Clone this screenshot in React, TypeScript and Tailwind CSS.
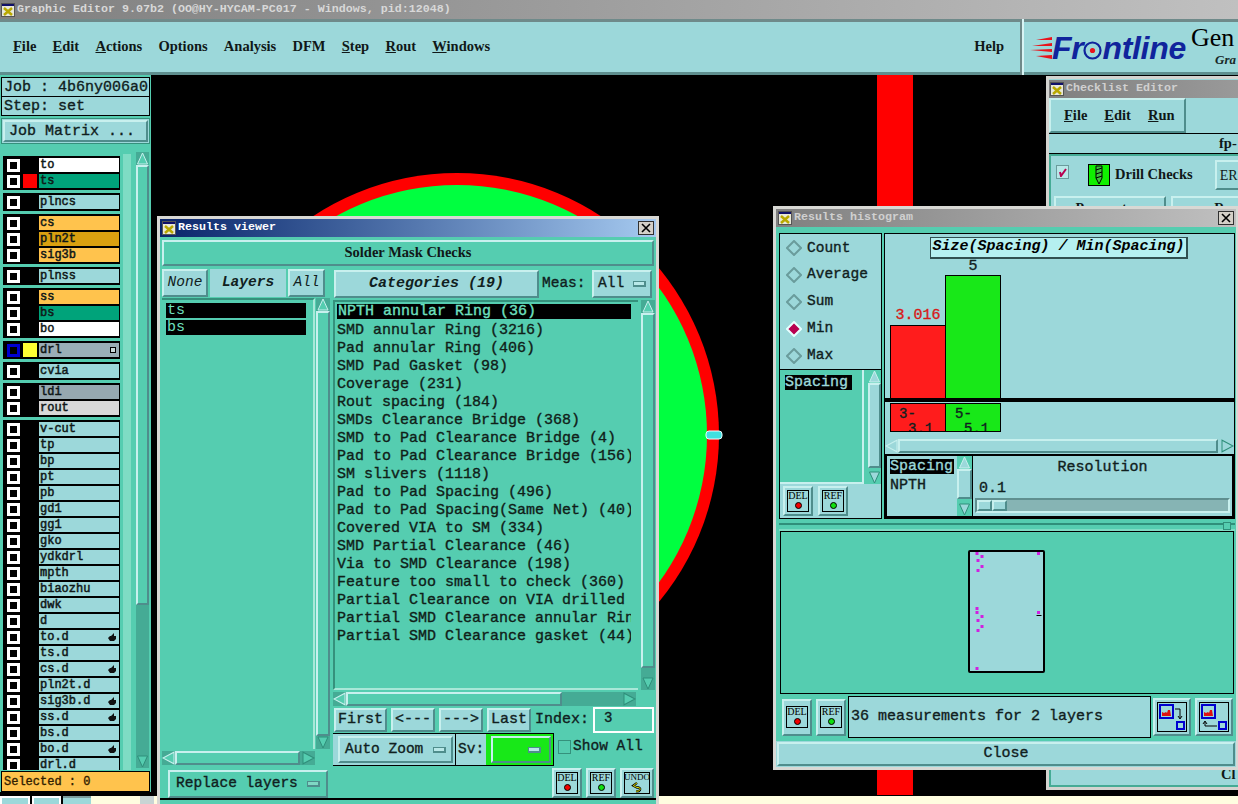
import React from "react";

const raised = "border-2 border-t-[#c8f0ee] border-l-[#c8f0ee] border-b-[#4f8d8c] border-r-[#4f8d8c]";
const mono = "font-['Liberation_Mono',monospace]";
const serif = "font-['Liberation_Serif',serif]";
// bitmap courier in the reference sits between regular and bold
const medium = "[-webkit-text-stroke:0.35px]";

const topLayers: { name: string; color: string; box?: string; boxBorder?: string; mark?: boolean }[][] = [
  [{ name: "to", color: "bg-white" }, { name: "ts", color: "bg-[#00a37a]", box: "bg-[#ff0000]" }],
  [{ name: "plncs", color: "bg-[#9cd8da]" }],
  [
    { name: "cs", color: "bg-[#ffc34d]" },
    { name: "pln2t", color: "bg-[#daa010]" },
    { name: "sig3b", color: "bg-[#ffc34d]" },
  ],
  [{ name: "plnss", color: "bg-[#9cd8da]" }],
  [
    { name: "ss", color: "bg-[#ffc34d]" },
    { name: "bs", color: "bg-[#00a37a]" },
    { name: "bo", color: "bg-white" },
  ],
  [{ name: "drl", color: "bg-[#9aaeb6]", box: "bg-[#ffff33]", boxBorder: "border-[#0000d0]", mark: true }],
  [{ name: "cvia", color: "bg-[#9cd8da]" }],
  [{ name: "ldi", color: "bg-[#96a8b0]" }, { name: "rout", color: "bg-[#d8d8d8]" }],
];

const restLayers: [string, boolean][] = [
  ["v-cut", false], ["tp", false], ["bp", false], ["pt", false], ["pb", false], ["gd1", false],
  ["gg1", false], ["gko", false], ["ydkdrl", false], ["mpth", false], ["biaozhu", false], ["dwk", false],
  ["d", false], ["to.d", true], ["ts.d", false], ["cs.d", true], ["pln2t.d", false], ["sig3b.d", true],
  ["ss.d", true], ["bs.d", false], ["bo.d", true], ["drl.d", false],
];

const categories = [
  "NPTH annular Ring (36)",
  "SMD annular Ring (3216)",
  "Pad annular Ring (406)",
  "SMD Pad Gasket (98)",
  "Coverage (231)",
  "Rout spacing (184)",
  "SMDs Clearance Bridge (368)",
  "SMD to Pad Clearance Bridge (4)",
  "Pad to Pad Clearance Bridge (156)",
  "SM slivers (1118)",
  "Pad to Pad Spacing (496)",
  "Pad to Pad Spacing(Same Net) (40)",
  "Covered VIA to SM (334)",
  "SMD Partial Clearance (46)",
  "Via to SMD Clearance (198)",
  "Feature too small to check (360)",
  "Partial Clearance on VIA drilled",
  "Partial SMD Clearance annular Rin",
  "Partial SMD Clearance gasket (44)",
];

function AppIcon() {
  return (
    <svg width="14" height="14" viewBox="0 0 14 14" className="shrink-0">
      <rect width="14" height="14" fill="#e8e8d8" />
      <rect width="14" height="3" fill="#10106a" />
      <path d="M3 5l8 7M11 5l-8 7" stroke="#b8a800" strokeWidth="2.5" />
      <rect x="0.5" y="0.5" width="13" height="13" fill="none" stroke="#555" />
    </svg>
  );
}

function CloseBox() {
  return (
    <svg width="16" height="14" viewBox="0 0 16 14" className="ml-auto mr-[2px] shrink-0">
      <rect x="0.5" y="0.5" width="15" height="13" fill="#d4d0c8" stroke="#303030" />
      <path d="M4 3l8 8M12 3l-8 8" stroke="#000" strokeWidth="1.6" />
    </svg>
  );
}

function LayerRow({ name, color, box, boxBorder, mark, hand }: {
  name: string; color: string; box?: string; boxBorder?: string; mark?: boolean; hand?: boolean;
}) {
  return (
    <div className="flex h-[16px] items-center bg-black">
      <div className={`ml-[3px] h-[13px] w-[13px] shrink-0 border-[3px] bg-black ${boxBorder ?? "border-white"}`} />
      <div className={`ml-[3px] h-[14px] w-[14px] shrink-0 ${box ?? "bg-black"}`} />
      <div className={`ml-[2px] flex h-[14px] w-[81px] items-center justify-between pl-px pr-[3px] text-[12px] leading-none text-[#101818] [-webkit-text-stroke:0.5px] ${mono} ${color}`}>
        <span>{name}</span>
        {mark && <span className="h-[6px] w-[6px] border border-black bg-[#c8d8d8]" />}
        {hand && (
          <svg width="8" height="8" viewBox="0 0 8 8">
            <path d="M0 5l2-2 1 0 3-3 0 3 2 0 0 3-2 2-4 0z" fill="#111" />
          </svg>
        )}
      </div>
    </div>
  );
}

function VScroll({ className, thumb, track = "bg-[#45ab95]", fill = "bg-[#55cdb0]", arrows = "#55cdb0" }: {
  className: string; thumb: string; track?: string; fill?: string; arrows?: string;
}) {
  return (
    <div className={`flex shrink-0 flex-col ${track} ${className}`}>
      <svg width="100%" height="13" viewBox="0 0 12 13" className="shrink-0">
        <path d="M6 1l5 11H1z" fill={arrows} stroke="#c8f0ee" />
      </svg>
      <div className={`w-full shrink-0 ${fill} ${raised} ${thumb}`} />
      <div className="flex-1" />
      <svg width="100%" height="13" viewBox="0 0 12 13" className="shrink-0">
        <path d="M6 12L11 1H1z" fill={arrows} stroke="#2f8f7a" />
      </svg>
    </div>
  );
}

function HScroll({ className, thumb, arrows = "#55cdb0", fill = "bg-[#55cdb0]", track = "bg-[#45ab95]" }: {
  className: string; thumb: string; arrows?: string; fill?: string; track?: string;
}) {
  return (
    <div className={`flex shrink-0 items-stretch ${track} ${className}`}>
      <svg width="13" height="100%" viewBox="0 0 13 12" preserveAspectRatio="none" className="shrink-0">
        <path d="M1 6l11-5v10z" fill={arrows} stroke="#c8f0ee" />
      </svg>
      <div className={`${fill} ${raised} ${thumb}`} />
      <div className="flex-1" />
      <svg width="13" height="100%" viewBox="0 0 13 12" preserveAspectRatio="none" className="shrink-0">
        <path d="M12 6L1 1v10z" fill={arrows} stroke="#2f8f7a" />
      </svg>
    </div>
  );
}

function DotButton({ label, dot, className = "h-[30px]" }: { label: string; dot: string; className?: string }) {
  return (
    <div className={`flex w-[30px] shrink-0 items-center justify-center bg-[#9cd8da] ${raised} ${className}`}>
      <div className="flex h-[22px] w-[22px] flex-col items-center border border-black">
        <span className={`text-[10px] leading-[10px] text-black ${serif}`}>{label}</span>
        <span className={`mt-px h-[7px] w-[7px] rounded-full border border-black ${dot}`} />
      </div>
    </div>
  );
}

function MoveIcon({ back }: { back?: boolean }) {
  return (
    <div className={`flex h-[38px] w-[38px] shrink-0 items-center justify-center bg-[#9cd8da] ${raised}`}>
      <svg width="30" height="30" viewBox="0 0 30 30">
        <rect x="0.5" y="0.5" width="29" height="29" fill="none" stroke="#000" />
        <rect x="3" y="3" width="13" height="13" fill="#9cd8da" stroke="#0000d0" strokeWidth="2" />
        <path d="M5 14V10l2 1 2-1 1 1 1-3 2 0 1 6z" fill="#e01010" />
        <rect x="20" y="20" width="7" height="7" fill="none" stroke="#0000d0" strokeWidth="2" />
        {back ? (
          <path d="M18 24H6V20M4 22l2-3 2 3" fill="none" stroke="#000" />
        ) : (
          <path d="M18 7h5v9M21 14l2 3 2-3" fill="none" stroke="#000" />
        )}
      </svg>
    </div>
  );
}

function Radio({ label, on }: { label: string; on?: boolean }) {
  return (
    <div className={`flex h-[27px] items-center gap-[5px] pl-[6px] text-[14.5px] text-[#102020] ${medium} ${mono}`}>
      <svg width="16" height="16" viewBox="0 0 16 16">
        <path d="M8 1l7 7-7 7-7-7z" fill={on ? "#b80050" : "#9cd8da"} stroke={on ? "#e8ffff" : "#6a9c9c"} strokeWidth="2" />
      </svg>
      <span>{label}</span>
    </div>
  );
}

function DropMark({ light }: { light?: boolean }) {
  return <span className={`h-[6px] w-[13px] border border-b-2 border-r-2 border-[#4f8d8c] ${light ? "bg-[#b8e8e8]" : "bg-[#7fd8c4]"}`} />;
}

function Frontline() {
  return (
    <div className="flex w-[158px] shrink-0 items-center">
      <svg width="22" height="26" viewBox="0 0 22 26" className="shrink-0">
        <path d="M22 2L6 5h16zM22 8L2 11h20zM22 14L0 15l22 2zM22 20L6 21l16 3z" fill="#e8141c" />
      </svg>
      <span className="flex items-center text-[32px] font-bold italic leading-none tracking-[-0.3px] text-[#10249c] font-['Liberation_Sans',sans-serif]">
        Fr
        <svg width="19" height="19" viewBox="0 0 19 19" className="mt-[4px] shrink-0">
          <circle cx="9.5" cy="9.5" r="8" fill="none" stroke="#10249c" strokeWidth="2.2" />
          <circle cx="9.5" cy="9.5" r="2.6" fill="#e8141c" />
        </svg>
        ntline
      </span>
    </div>
  );
}

export default function App() {
  return (
    <div className={`relative flex h-[804px] w-[1238px] flex-col overflow-hidden bg-black ${mono}`}>
      {/* main window title */}
      <div className="flex h-[19px] shrink-0 items-center gap-[2px] bg-gradient-to-r from-[#808080] to-[#c0c0c0] pl-[1px] text-[11.67px] font-bold text-[#d8d8d8]">
        <AppIcon />
        <span>Graphic Editor 9.07b2 (OO@HY-HYCAM-PC017 - Windows, pid:12048)</span>
      </div>

      {/* menu bar + logo */}
      <div className="flex h-[56px] shrink-0 bg-[#d8f4f4]">
        <div className={`flex flex-1 items-center justify-between border-y-[3px] border-t-[#6f8a8a] border-b-[#5f8f8f] bg-[#9cd8da] pl-[13px] pr-[16px] text-[14.5px] font-bold text-[#101818] ${serif}`}>
          <div className="flex gap-[16.25px]">
            <span><span className="underline">F</span>ile</span>
            <span><span className="underline">E</span>dit</span>
            <span><span className="underline">A</span>ctions</span>
            <span>Options</span>
            <span>Analysis</span>
            <span>DFM</span>
            <span><span className="underline">S</span>tep</span>
            <span><span className="underline">R</span>out</span>
            <span><span className="underline">W</span>indows</span>
          </div>
          <span>Help</span>
        </div>
        <div className="w-[4px] border-l-2 border-[#6f8a8a]" />
        <div className="flex w-[214px] shrink-0 items-start gap-[3px] border-y-[3px] border-t-[#6f8a8a] border-b-[#5f8f8f] bg-[#9cd8da] pl-[6px] pt-[10px]">
          <Frontline />
          <div className={`-mt-[8px] flex flex-col ${serif}`}>
            <span className="text-[26px] leading-[28px] text-black">Gen</span>
            <span className="ml-[24px] text-[13px] font-bold italic leading-[16px] text-[#182828]">Gra</span>
          </div>
        </div>
      </div>

      <div className="flex min-h-0 flex-1">
        {/* left layer panel */}
        <div className="flex w-[151px] shrink-0 flex-col bg-[#55cdb0] pt-[2px]">
          <div className={`mx-px flex h-[20px] items-center border border-black bg-[#9cd8da] pl-[2px] text-[15px] leading-none whitespace-nowrap text-[#102020] ${medium}`}>
            Job : 4b6ny006a0
          </div>
          <div className={`mx-px flex h-[19px] items-center border border-t-0 border-black bg-[#9cd8da] pl-[2px] text-[15px] leading-none text-[#102020] ${medium}`}>
            Step: set
          </div>
          <div className="mx-px mt-[2px] flex h-[26px] items-center border border-[#35917c] bg-[#9cd8da] p-[1px]">
            <div className={`flex h-full w-full items-center pl-[4px] pt-[2px] text-[15px] text-[#102020] ${medium} ${raised}`}>
              Job Matrix ...
            </div>
          </div>
          <div className="mt-[4px] flex min-h-0 flex-1 flex-col">
            <div className="flex h-[622px] min-h-0 overflow-hidden pt-[2px]">
              <div className="flex w-[120px] shrink-0 flex-col gap-[3px] overflow-hidden pl-[3px] pt-[6px]">
                {topLayers.map((group, i) => (
                  <div key={i} className="flex flex-col border border-black bg-black">
                    {group.map((l) => (
                      <LayerRow key={l.name} {...l} />
                    ))}
                  </div>
                ))}
                <div className="flex flex-col border border-black bg-black">
                  {restLayers.map(([name, hand]) => (
                    <LayerRow key={name} name={name} color="bg-[#9cd8da]" hand={hand} />
                  ))}
                </div>
              </div>
              <div className="ml-[3px] mt-[4px] w-[8px] bg-[#7fdcc4]" />
              <VScroll className="ml-[5px] mt-[2px] h-[616px] w-[13px]" thumb="h-[440px]" />
            </div>
            <div className={`mx-px mt-[1px] flex h-[21px] items-center border border-black bg-[#ffc34d] pl-[2px] text-[12px] text-[#302000] ${medium}`}>
              Selected : 0
            </div>
            <div className="flex-1 bg-black" />
          </div>
        </div>

        {/* canvas */}
        <div className="relative min-w-0 flex-1 bg-black">
          <svg width="1087" height="721" viewBox="0 0 1087 721" className="block">
            <circle cx="306" cy="360" r="262" fill="#ff0000" />
            <circle cx="306" cy="360" r="250" fill="#00ff40" />
            <rect x="726" y="0" width="36" height="720" fill="#ff0000" />
            <rect x="555" y="356" width="16" height="8" rx="3" fill="#40e0e0" stroke="#e8ffff" />
          </svg>
        </div>
      </div>

      {/* bottom strip */}
      <div className="flex h-[8px] shrink-0 bg-[#fffde0]">
        <div className="w-[30px] border-2 border-b-0 border-white bg-[#9cd8da]" />
        <div className="w-[2px] bg-black" />
        <div className="w-[29px] border-2 border-b-0 border-white bg-[#9cd8da]" />
        <div className="w-[2px] bg-black" />
        <div className="w-[28px] border-t-2 border-[#7a9c9c] bg-[#9cd8da]" />
        <div className="w-[49px]" />
        <div className="w-[14px] bg-[#c8d4d4]" />
      </div>

      {/* Checklist editor (behind histogram) */}
      <div className="absolute left-[1046px] top-[76px] flex h-[714px] w-[360px] flex-col border-[3px] border-[#d4d4d0] bg-[#9cd8da]">
        <div className={`mt-px flex h-[18px] shrink-0 items-center gap-[2px] bg-gradient-to-r from-[#808080] to-[#b0b0b0] pl-[1px] text-[11.67px] font-bold text-[#d0d0d0] ${mono}`}>
          <AppIcon />
          <span>Checklist Editor</span>
        </div>
        <div className={`flex h-[35px] w-[137px] shrink-0 items-center gap-[17px] pl-[13px] text-[14.5px] font-bold text-[#101818] ${raised} ${serif}`}>
          <span><span className="underline">F</span>ile</span>
          <span><span className="underline">E</span>dit</span>
          <span><span className="underline">R</span>un</span>
        </div>
        <div className={`flex h-[21px] shrink-0 items-center border-y border-black pl-[170px] text-[14.5px] font-bold text-[#101818] ${serif}`}>
          fp-
        </div>
        <div className="flex flex-1 flex-col bg-[#45ab95] p-[2px]">
          <div className="flex h-[38px] shrink-0 items-center bg-[#9cd8da] pl-[5px]">
            <div className="mb-[6px] flex h-[14px] w-[13px] items-center justify-center border border-[#6a9c9c] bg-[#b8e8e8]">
              <svg width="10" height="10" viewBox="0 0 10 10"><path d="M2 5l1 4 5-7" fill="none" stroke="#b80050" strokeWidth="2" /></svg>
            </div>
            <svg width="22" height="22" viewBox="0 0 22 22" className="ml-[19px] shrink-0">
              <rect x="0.5" y="0.5" width="21" height="21" fill="#10f000" stroke="#000" />
              <path d="M8 2h6v12l-3 6-3-6z" fill="#40c040" stroke="#000" />
              <path d="M8 6l6-2M8 10l6-2M8 14l6-2" stroke="#000" />
            </svg>
            <span className={`ml-[5px] text-[14.5px] font-bold text-[#101818] ${serif}`}>Drill Checks</span>
            <div className={`ml-[22px] flex h-[30px] w-[60px] items-center pl-[3px] text-[14px] text-[#101818] ${raised} ${serif}`}>ER</div>
          </div>
          <div className={`flex flex-1 gap-[5px] bg-[#9cd8da] pl-[3px] pt-[2px] text-[14px] font-bold text-[#101818] ${serif}`}>
            <div className={`h-[24px] w-[112px] text-center ${raised}`}>Parameters</div>
            <div className={`h-[24px] w-[112px] text-center ${raised}`}>Run</div>
          </div>
          <div className="flex h-[20px] items-center bg-[#9cd8da] pl-[170px]">
            <span className={`text-[14.5px] font-bold text-[#101818] ${serif}`}>Cl</span>
          </div>
        </div>
      </div>

      {/* Results viewer */}
      <div className="absolute left-[157px] top-[216px] flex h-[592px] w-[502px] flex-col border-[3px] border-[#d8d8d4] bg-[#55cdb0]">
        <div className="flex h-[18px] shrink-0 items-center gap-[2px] bg-gradient-to-r from-[#0a246a] to-[#a6caf0] pl-[2px]">
          <AppIcon />
          <span className="text-[11.67px] font-bold text-white">Results viewer</span>
          <CloseBox />
        </div>
        <div className={`mx-[2px] mt-[3px] flex h-[26px] shrink-0 items-center justify-center bg-[#55cdb0] text-[14.5px] font-bold text-[#101818] ${raised} ${serif}`}>
          Solder Mask Checks
        </div>
        <div className="flex h-[534px] shrink-0 border-b-2 border-black pt-[3px]">
          {/* layers column */}
          <div className="flex w-[173px] shrink-0 flex-col pl-[2px]">
            <div className="flex h-[28px] shrink-0 gap-[2px] text-[14.5px] italic text-[#102020]">
              <div className={`flex w-[46px] items-center justify-center bg-[#9cd8da] ${raised}`}>None</div>
              <div className="flex w-[76px] items-center justify-center bg-[#9cd8da] font-bold">Layers</div>
              <div className={`flex w-[37px] items-center justify-center bg-[#9cd8da] ${raised}`}>All</div>
            </div>
            <div className="flex min-h-0 flex-1 pt-[1px]">
              <div className="flex h-[451px] w-[153px] flex-col gap-[2px] border-r-2 border-t-2 border-r-[#a8e8d8] border-t-[#35917c] pl-[4px] pr-[7px] pt-[3px] text-[15px] text-[#6fe0c0]">
                <div className="h-[15px] w-full bg-black pl-px leading-[15px]">ts</div>
                <div className="h-[15px] w-full bg-black pl-px leading-[15px]">bs</div>
              </div>
              <div className="ml-[1px] h-[451px] w-[14px]">
                <VScroll className="h-full w-full" thumb="h-[425px]" />
              </div>
            </div>
            <HScroll className="mb-[5px] mt-[2px] h-[14px] w-[153px]" thumb="w-[125px]" />
            <div className={`ml-[6px] flex h-[28px] w-[160px] shrink-0 items-center justify-between bg-[#55cdb0] px-[6px] text-[14.5px] text-[#102020] ${medium} ${raised}`}>
              <span>Replace layers</span>
              <DropMark />
            </div>
          </div>

          {/* categories column */}
          <div className="flex min-w-0 flex-1 flex-col">
            <div className="flex h-[30px] shrink-0 items-center pl-px">
              <div className={`flex h-[28px] w-[205px] items-center justify-center bg-[#9cd8da] text-[15px] font-bold italic text-[#102020] ${raised}`}>
                Categories (19)
              </div>
              <span className={`ml-[3px] w-[50px] text-[14.5px] text-[#102020] ${medium}`}>Meas:</span>
              <div className={`flex h-[28px] w-[60px] items-center justify-between bg-[#9cd8da] px-[4px] text-[14.5px] text-[#102020] ${medium} ${raised}`}>
                <span>All</span>
                <DropMark light />
              </div>
            </div>
            <div className="flex h-[391px] shrink-0 pt-[1px]">
              <div className={`w-[305px] shrink-0 overflow-hidden border-y-2 border-l-2 border-t-[#35917c] border-b-[#a8e8d8] border-l-[#35917c] pl-[2px] pt-[2px] text-[15px] leading-[18px] whitespace-nowrap text-[#102018] ${medium}`}>
                {categories.map((c, i) => (
                  <div key={c} className="h-[18px] w-[294px] overflow-hidden">
                    {i === 0 ? (
                      <div className="h-[15px] bg-black pl-px leading-[15px] text-[#6fe0c0]">{c}</div>
                    ) : (
                      c
                    )}
                  </div>
                ))}
              </div>
              <div className="ml-[3px] h-full w-[14px]">
                <VScroll className="h-full w-full" thumb="h-[355px]" />
              </div>
            </div>
            <HScroll className="mt-[2px] h-[14px] w-[303px]" thumb="w-[216px]" />
            <div className={`mt-[1px] flex h-[26px] shrink-0 items-center gap-[4px] bg-[#55cdb0] pl-px text-[15px] text-[#102020] ${medium}`}>
              <div className={`flex h-[24px] w-[53px] items-center justify-center bg-[#9cd8da] ${raised}`}>First</div>
              <div className={`flex h-[24px] w-[44px] items-center justify-center bg-[#9cd8da] ${raised}`}>&lt;---</div>
              <div className={`flex h-[24px] w-[44px] items-center justify-center bg-[#9cd8da] ${raised}`}>---&gt;</div>
              <div className={`flex h-[24px] w-[44px] items-center justify-center bg-[#9cd8da] ${raised}`}>Last</div>
              <span className="w-[54px] whitespace-nowrap text-[15px]">Index:</span>
              <div className="flex h-[26px] w-[61px] items-start border-2 border-white bg-[#55cdb0] pl-[9px] text-[14px] leading-[18px]">3</div>
            </div>
            <div className="flex h-[33px] shrink-0 items-center">
              <div className="flex h-[33px] items-center border border-l-0 border-black bg-[#9cd8da] pl-[5px] pr-[2px]">
                <div className={`flex h-[27px] w-[115px] items-center justify-between px-[5px] text-[14.5px] text-[#102020] ${medium} ${raised}`}>
                  <span>Auto Zoom</span>
                  <DropMark light />
                </div>
              </div>
              <div className={`flex h-[33px] items-center border border-l-0 border-black bg-[#9cd8da] text-[14.5px] text-[#102020] ${medium}`}>
                <span className="px-[2px]">Sv:</span>
                <div className="flex h-full w-[67px] items-center bg-[#18e818] pl-[5px]">
                  <div className={`flex h-[27px] w-[60px] items-center justify-end pr-[8px] ${raised}`}>
                    <DropMark light />
                  </div>
                </div>
              </div>
              <div className="mb-[6px] ml-[4px] h-[14px] w-[13px] border border-[#35917c]" />
              <span className={`mb-[6px] ml-[2px] text-[14.5px] text-[#102020] ${medium}`}>Show All</span>
            </div>
            <div className="flex justify-end gap-[4px] pr-[2px] pt-[2px]">
              <DotButton label="DEL" dot="bg-[#f00000]" />
              <DotButton label="REF" dot="bg-[#10e010]" />
              <div className={`flex h-[30px] w-[34px] shrink-0 items-center justify-center bg-[#9cd8da] ${raised}`}>
                <div className="flex h-[22px] w-[26px] flex-col items-center border border-black">
                  <span className={`text-[9px] leading-[9px] text-black ${serif}`}>UNDO</span>
                  <svg width="12" height="12" viewBox="0 0 12 12">
                    <path d="M6 1L2 4l4 2h2c3 1 1 5-3 4" fill="none" stroke="#000" strokeWidth="2.5" />
                    <path d="M6 1L2 4l4 2h2c3 1 1 5-3 4" fill="none" stroke="#f0f000" />
                  </svg>
                </div>
              </div>
            </div>
          </div>
        </div>
      </div>

      {/* Results histogram */}
      <div className="absolute left-[773px] top-[206px] flex h-[564px] w-[466px] flex-col border-[3px] border-[#d8d8d4] bg-[#9cd8da]">
        <div className="flex h-[18px] shrink-0 items-center gap-[2px] bg-gradient-to-r from-[#808080] to-[#c0c0c0] pl-[2px]">
          <AppIcon />
          <span className="text-[11.67px] font-bold text-[#d0d0d0]">Results histogram</span>
          <CloseBox />
        </div>
        <div className="flex min-h-0 flex-1 flex-col bg-[#55cdb0] pl-[3px] pr-[1px] pt-[6px]">
          <div className="flex h-[286px] shrink-0 gap-[2px]">
            {/* left column */}
            <div className="flex w-[103px] shrink-0 flex-col border border-black bg-[#9cd8da]">
              <div className="flex h-[136px] shrink-0 flex-col border-b border-black pt-px">
                <Radio label="Count" />
                <Radio label="Average" />
                <Radio label="Sum" />
                <Radio label="Min" on />
                <Radio label="Max" />
              </div>
              <div className="flex h-[114px] shrink-0 bg-[#55cdb0]">
                <div className={`w-[84px] shrink-0 border-b-2 border-r-2 border-[#c8f0ee] pl-[5px] pt-[5px] text-[15px] leading-none ${medium}`}>
                  <div className="inline-block bg-black pr-1 text-[#9cd8da]">Spacing</div>
                </div>
                <VScroll className="ml-[4px] h-full w-[13px]" thumb="h-[85px]" track="bg-[#55cdb0]" fill="bg-[#9cd8da]" arrows="#9cd8da" />
              </div>
              <div className="flex flex-1 items-center gap-[5px] pl-[3px]">
                <DotButton label="DEL" dot="bg-[#f00000]" />
                <DotButton label="REF" dot="bg-[#10e010]" />
              </div>
            </div>
            {/* chart */}
            <div className="flex min-w-0 flex-1 flex-col border border-black bg-[#9cd8da]">
              <div className="relative flex h-[168px] shrink-0 border-b-[4px] border-black pl-[5px]">
                <div className="absolute left-[45px] top-[3px] flex h-[22px] w-[258px] items-center justify-center border border-b-2 border-r-2 border-[#305050] bg-[#b5f0f0] text-[15px] font-bold italic whitespace-nowrap text-black">
                  Size(Spacing) / Min(Spacing)
                </div>
                <div className="flex items-end">
                  <div className="flex w-[56px] flex-col items-center">
                    <span className={`text-[15px] leading-[18px] text-[#d81818] ${medium}`}>3.016</span>
                    <div className="h-[73px] w-full border border-b-0 border-black bg-[#ff1c1c]" />
                  </div>
                  <div className="-ml-px flex w-[56px] flex-col items-center">
                    <span className={`text-[15px] leading-[16px] text-[#102020] ${medium}`}>5</span>
                    <div className="h-[123px] w-full border border-b-0 border-black bg-[#18e818]" />
                  </div>
                </div>
              </div>
              <div className={`flex h-[32px] shrink-0 items-start pl-[5px] pt-px text-[14px] leading-[15px] text-[#102020] ${medium}`}>
                <div className="h-[29px] w-[56px] overflow-hidden border border-black bg-[#ff1c1c] pl-[8px] pt-[3px]">
                  3-<br /><span className="pl-[9px]">3.1</span>
                </div>
                <div className="-ml-px h-[29px] w-[56px] overflow-hidden border border-black bg-[#18e818] pl-[9px] pt-[3px]">
                  5-<br /><span className="pl-[9px]">5.1</span>
                </div>
              </div>
              <HScroll className="mt-[5px] h-[14px] w-full" thumb="w-[320px]" fill="bg-[#9cd8da]" arrows="#9cd8da" track="bg-[#9cd8da]" />
              <div className="mt-[1px] flex min-h-0 flex-1 border-2 border-black">
                <div className={`flex w-[70px] shrink-0 flex-col pl-[3px] pt-[3px] text-[15px] leading-[18px] text-[#102020] ${medium}`}>
                  <div className="h-[15px] w-[64px] overflow-hidden bg-black leading-[15px] text-[#9cd8da]">Spacing</div>
                  <div className="mt-[3px]">NPTH</div>
                </div>
                <VScroll className="h-full w-[15px]" thumb="h-[30px]" track="bg-[#55cdb0]" fill="bg-[#9cd8da]" arrows="#9cd8da" />
                <div className={`flex flex-1 flex-col border-l border-black text-[15px] leading-[18px] text-[#102020] ${medium}`}>
                  <div className="pt-[3px] text-center">Resolution</div>
                  <div className="mt-[3px] pl-[6px]">0.1</div>
                  <div className="mx-[2px] flex h-[15px] border-2 border-t-[#5f8f8f] border-l-[#5f8f8f] border-b-[#c8f0ee] border-r-[#c8f0ee] bg-[#86b4b4]">
                    <div className={`h-full w-[15px] bg-[#9cd8da] ${raised}`} />
                    <div className={`h-full w-[15px] bg-[#9cd8da] ${raised}`} />
                  </div>
                </div>
              </div>
            </div>
          </div>

          {/* sash */}
          <div className="relative mt-[4px] h-[8px] shrink-0 border-y-2 border-t-[#2f8f7a] border-b-[#7fdcc4]">
            <div className="absolute right-[4px] -top-[3px] h-[8px] w-[8px] border border-[#2f8f7a] bg-[#55cdb0]" />
          </div>

          {/* map */}
          <div className="mx-[1px] flex h-[163px] shrink-0 items-start justify-center border border-black bg-[#55cdb0] pr-[2px] pt-[18px]">
            <div className="relative h-[123px] w-[77px] overflow-hidden rounded-[2px] border-2 border-black bg-[#9cd8da]">
              <svg width="73" height="119" viewBox="970 552 73 119" className="block">
                <g fill="#d020e0">
                  <rect x="975.5" y="552" width="3" height="3" />
                  <rect x="980.5" y="555" width="3" height="3" />
                  <rect x="976.5" y="559" width="3" height="3" />
                  <rect x="980.5" y="565" width="3" height="3" />
                  <rect x="976.5" y="569" width="3" height="3" />
                  <rect x="975.5" y="607" width="3" height="3" />
                  <rect x="975.5" y="611" width="3" height="3" />
                  <rect x="980.5" y="615" width="3" height="3" />
                  <rect x="976.5" y="619" width="3" height="3" />
                  <rect x="980.5" y="625" width="3" height="3" />
                  <rect x="976.5" y="629" width="3" height="3" />
                  <rect x="1037" y="552" width="3" height="3" />
                  <rect x="1037" y="611" width="3" height="3" />
                  <rect x="975.5" y="667" width="3" height="3" />
                </g>
                <rect x="1036.5" y="615" width="5" height="1" fill="#000" />
              </svg>
            </div>
          </div>

          {/* bottom row */}
          <div className="mt-[2px] flex h-[42px] shrink-0 items-center pl-[3px] pr-[2px]">
            <DotButton label="DEL" dot="bg-[#f00000]" className="h-[37px]" />
            <DotButton label="REF" dot="bg-[#10e010]" className="ml-[4px] h-[37px]" />
            <div className={`ml-[2px] flex h-[42px] flex-1 items-center border border-black bg-[#9cd8da] pl-[2px] text-[15px] whitespace-nowrap text-[#102020] ${medium}`}>
              36 measurements for 2 layers
            </div>
            <div className="ml-[2px]"><MoveIcon /></div>
            <div className="ml-[4px]"><MoveIcon back /></div>
          </div>

          <div className="-ml-[3px] -mr-[1px] mt-[3px] flex-1 bg-[#9cd8da] p-[1px]">
            <div className={`flex h-[24px] items-center justify-center text-[15px] text-[#102020] ${medium} ${raised}`}>Close</div>
          </div>
        </div>
      </div>
    </div>
  );
}
